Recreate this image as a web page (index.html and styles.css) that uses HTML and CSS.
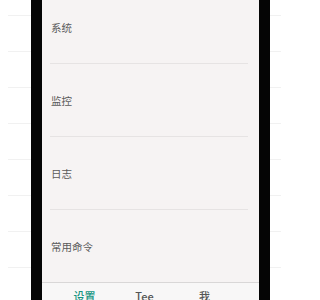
FILE: index.html
```html
<!DOCTYPE html>
<html lang="zh">
<head>
<meta charset="utf-8">
<link rel="stylesheet" href="styles.css">
</head>
<body>
<div class="stage">
  <div class="gutter gutter-left">
    <div class="gline"></div><div class="gline"></div><div class="gline"></div><div class="gline"></div>
    <div class="gline"></div><div class="gline"></div><div class="gline"></div><div class="gline"></div>
  </div>
  <div class="phone">
    <div class="screen">
      <div class="list">
        <div class="row"><span class="label">系统</span></div>
        <div class="row"><span class="label">监控</span></div>
        <div class="row"><span class="label">日志</span></div>
        <div class="row"><span class="label">常用命令</span></div>
      </div>
      <div class="tabbar">
        <span class="tab active">设置</span>
        <span class="tab">Tee</span>
        <span class="tab">我</span>
      </div>
    </div>
  </div>
  <div class="gutter gutter-right">
    <div class="gline"></div><div class="gline"></div><div class="gline"></div><div class="gline"></div>
    <div class="gline"></div><div class="gline"></div><div class="gline"></div><div class="gline"></div>
  </div>
</div>
</body>
</html>
```

FILE: styles.css
```css
html, body {
  margin: 0;
  padding: 0;
  background: #ffffff;
}
body {
  font-family: "Noto Sans CJK SC", "Liberation Sans", sans-serif;
  width: 300px;
  height: 300px;
  overflow: hidden;
}
.stage {
  display: flex;
  height: 300px;
}
.gutter {
  display: flex;
  flex-direction: column;
  gap: 35px;
  padding-top: 15px;
}
.gutter-left {
  width: 31px;
  padding-left: 8px;
  box-sizing: border-box;
}
.gutter-right {
  width: 11px;
}
.gline {
  height: 1px;
  background: #f1f1f1;
}
.phone {
  width: 239px;
  height: 300px;
  box-sizing: border-box;
  border-left: 11px solid #050505;
  border-right: 11px solid #050505;
  background: #f6f3f3;
}
.screen {
  display: flex;
  flex-direction: column;
  height: 300px;
  overflow: hidden;
}
.list {
  flex: 1;
  margin-top: -9px;
  overflow: hidden;
}
.row {
  height: 73px;
  box-sizing: border-box;
  display: flex;
  align-items: center;
  padding-left: 9px;
  position: relative;
}
.row::after {
  content: "";
  position: absolute;
  left: 8px;
  right: 11px;
  bottom: 0;
  height: 1px;
  background: #e6e3e3;
}
.label {
  font-size: 10.5px;
  color: #5a5a5a;
  line-height: 14px;
}
.tabbar {
  height: 11px;
  flex: none;
  border-top: 1px solid #d9d7d7;
  background: #f8f7f7;
  display: grid;
  grid-template-columns: repeat(3, 60px);
  justify-content: center;
  padding-top: 6px;
  padding-right: 12px;
  box-sizing: content-box;
  overflow: hidden;
}
.tab {
  text-align: center;
  font-size: 11px;
  line-height: 14px;
  color: #555555;
  font-weight: 500;
}
.tab.active {
  color: #13947f;
}
```
